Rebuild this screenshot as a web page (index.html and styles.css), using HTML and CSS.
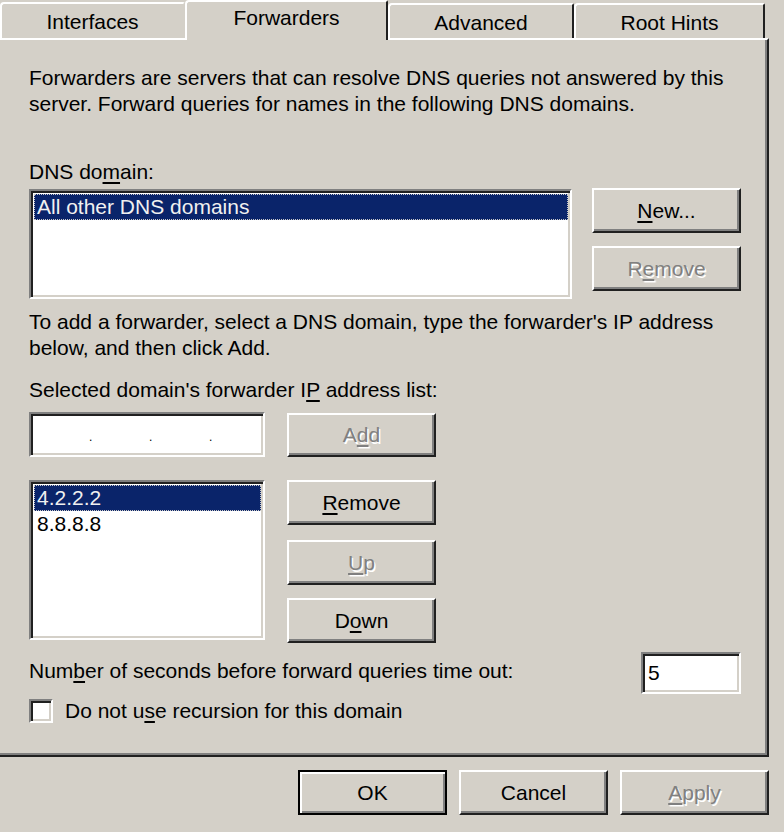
FILE: index.html
```html
<!DOCTYPE html>
<html>
<head>
<meta charset="utf-8">
<link rel="stylesheet" href="styles.css">
</head>
<body>
<div class="dialog">
  <div class="tabs">
    <div class="tab tab-interfaces">Interfaces</div>
    <div class="tab tab-active">Forwarders</div>
    <div class="tab tab-advanced">Advanced</div>
    <div class="tab tab-hints">Root Hints</div>
  </div>
  <div class="panel">
    <p class="text intro">Forwarders are servers that can resolve DNS queries not answered by this<br>server. Forward queries for names in the following DNS domains.</p>
    <p class="text label-domain">DNS do<u>m</u>ain:</p>
    <div class="row domain-row">
      <div class="field listbox domain-list">
        <div class="item selected">All other DNS domains</div>
      </div>
      <div class="btn-col domain-btns">
        <button class="btn"><u>N</u>ew...</button>
        <button class="btn disabled">R<u>e</u>move</button>
      </div>
    </div>
    <p class="text add-help">To add a forwarder, select a DNS domain, type the forwarder's IP address<br>below, and then click Add.</p>
    <p class="text label-ip">Selected domain's forwarder I<u>P</u> address list:</p>
    <div class="row ip-row">
      <div class="field ip-input">
        <span class="dot">.</span><span class="dot">.</span><span class="dot">.</span>
      </div>
      <button class="btn disabled add-btn">A<u>d</u>d</button>
    </div>
    <div class="row list-row">
      <div class="field listbox ip-list">
        <div class="item selected">4.2.2.2</div>
        <div class="item">8.8.8.8</div>
      </div>
      <div class="btn-col ip-btns">
        <button class="btn"><u>R</u>emove</button>
        <button class="btn disabled btn-up"><u>U</u>p</button>
        <button class="btn btn-down">D<u>o</u>wn</button>
      </div>
    </div>
    <div class="row timeout-row">
      <span class="text">Num<u>b</u>er of seconds before forward queries time out:</span>
      <div class="field timeout-input">5</div>
    </div>
    <div class="row check-row">
      <span class="field checkbox"></span>
      <span class="text">Do not u<u>s</u>e recursion for this domain</span>
    </div>
  </div>
  <div class="footer">
    <button class="btn btn-default">OK</button>
    <button class="btn">Cancel</button>
    <button class="btn disabled"><u>A</u>pply</button>
  </div>
</div>
</body>
</html>
```
FILE: styles.css
```css
* { box-sizing: border-box; }
html, body {
  margin: 0;
  padding: 0;
  background: #d4d0c8;
}
body {
  font-family: "Liberation Sans", Arial, sans-serif;
  font-size: 21px;
  color: #000;
}
.dialog {
  width: 784px;
  height: 832px;
  overflow: hidden;
}
u { text-decoration-thickness: 2px; text-underline-offset: 3px; }

/* tabs */
.tabs {
  display: flex;
  align-items: flex-end;
  height: 38px;
}
.tab {
  height: 36px;
  border-top: 2px solid #fff;
  border-left: 2px solid #fff;
  border-right: 2px solid #202020;
  border-top-left-radius: 4px;
  border-top-right-radius: 2px;
  display: flex;
  justify-content: center;
  align-items: center;
  padding-top: 2px;
  white-space: nowrap;
}
.tab-interfaces { width: 185px; border-right-color: transparent; }
.tab-active {
  width: 203px;
  height: 40px;
  margin-bottom: -2px;
  padding-top: 0;
  padding-bottom: 7px;
  background: #d4d0c8;
  position: relative;
  z-index: 1;
}
.tab-advanced { width: 186px; height: 35px; }
.tab-hints { width: 191px; height: 35px; }

/* panel */
.panel {
  width: 769px;
  height: 719px;
  border-top: 2px solid #fff;
  border-right: 2px solid #202020;
  border-bottom: 2px solid #202020;
  box-shadow: inset -2px -2px 0 #808080;
  padding-left: 29px;
  padding-right: 26px;
}
.text {
  margin: 0;
  line-height: 26px;
  white-space: nowrap;
}
.intro { margin-top: 25px; }
.label-domain { margin-top: 42px; }
.add-help { margin-top: 10px; }
.label-ip { margin-top: 16px; }

.row { display: flex; }

/* sunken fields */
.field {
  background: #fff;
  border-top: 2px solid #808080;
  border-left: 2px solid #808080;
  border-bottom: 2px solid #fff;
  border-right: 2px solid #fff;
  box-shadow: inset 2px 2px 0 #202020, inset -2px -2px 0 #d4d0c8;
}
.listbox { padding: 3px 2px 2px 3px; }
.item {
  height: 26px;
  line-height: 24px;
  padding-left: 2px;
  white-space: nowrap;
  border: 1px solid transparent;
}
.item.selected {
  background: #0a246a;
  color: #f0f0f0;
  border: 1px dotted #c8c8c8;
}

/* buttons */
.btn {
  font: inherit;
  color: #000;
  width: 149px;
  height: 45px;
  padding: 0;
  margin: 0;
  background: #d4d0c8;
  border-top: 2px solid #fff;
  border-left: 2px solid #fff;
  border-bottom: 2px solid #202020;
  border-right: 2px solid #202020;
  box-shadow: inset -2px -2px 0 #808080;
  display: flex;
  align-items: center;
  justify-content: center;
}
.btn.disabled {
  color: #808080;
  text-shadow: 1.5px 1.5px 0 #fff;
}
.btn-col { display: flex; flex-direction: column; }

.domain-row { margin-top: 3px; justify-content: space-between; }
.domain-list { width: 543px; height: 110px; margin-top: 1px; }
.domain-btns { gap: 13px; }

.ip-row { margin-top: 9px; gap: 22px; }
.ip-input {
  width: 236px;
  height: 45px;
  display: flex;
  align-items: center;
  padding-left: 58px;
  gap: 56px;
  font-size: 12px;
  padding-top: 4px;
}
.dot { width: 4px; }
.add-btn { margin-top: 1px; height: 44px; }

.list-row { margin-top: 23px; gap: 22px; }
.ip-list { width: 236px; height: 160px; }
.btn-up { margin-top: 15px; }
.btn-down { margin-top: 13px; }

.timeout-row {
  margin-top: 9px;
  justify-content: space-between;
  align-items: center;
}
.timeout-row .text { margin-top: -4px; }
.timeout-input {
  width: 100px;
  height: 42px;
  padding-left: 5px;
  line-height: 38px;
}
.check-row {
  margin-top: 4px;
  align-items: center;
  gap: 12px;
}
.checkbox {
  width: 24px;
  height: 24px;
  display: inline-block;
}

/* footer */
.footer {
  display: flex;
  justify-content: flex-end;
  gap: 12px;
  padding-right: 15px;
  margin-top: 13px;
}
.btn-default {
  border: 2px solid #000;
  box-shadow: inset 2px 2px 0 #fff, inset -2px -2px 0 #808080;
}
```
